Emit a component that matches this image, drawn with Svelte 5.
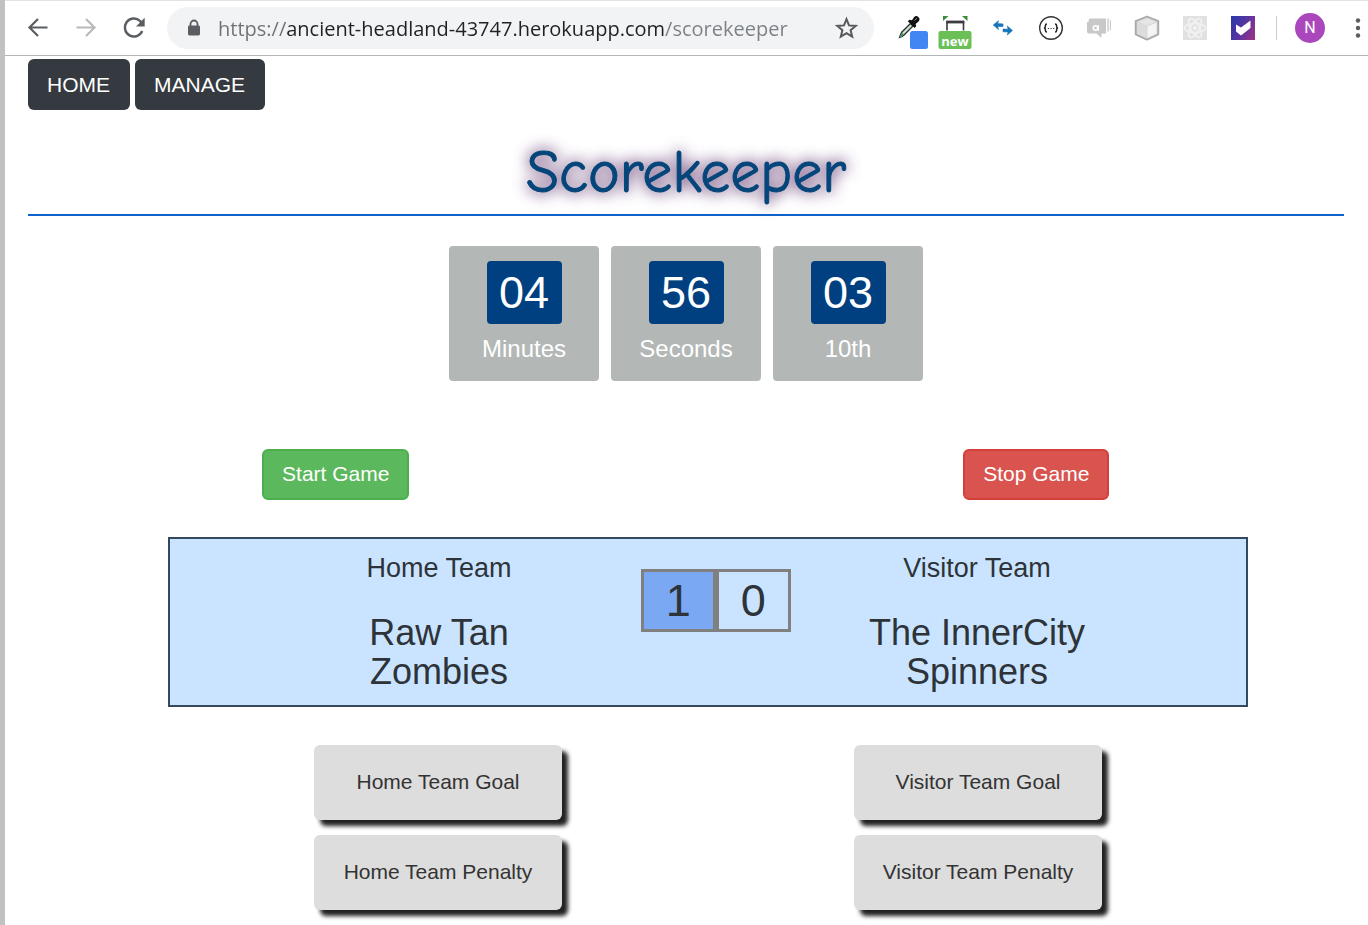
<script>
  let url = $state('https://ancient-headland-43747.herokuapp.com/scorekeeper');
  let homeScore = $state(1);
  let visitorScore = $state(0);
  const clock = [
    { value: '04', label: 'Minutes' },
    { value: '56', label: 'Seconds' },
    { value: '03', label: '10th' }
  ];
</script>

<div class="window">
  <header class="toolbar">
    <button class="slot" aria-label="Back">
      <svg viewBox="0 0 48 48"><path d="M33.5 23.5H16M24 15l-8.5 8.5L24 32" fill="none" stroke="#5a5d61" stroke-width="2.2" /></svg>
    </button>
    <button class="slot" aria-label="Forward">
      <svg viewBox="0 0 48 48"><path d="M14.5 23.5H32M24 15l8.5 8.5L24 32" fill="none" stroke="#bababa" stroke-width="2.2" /></svg>
    </button>
    <button class="slot" aria-label="Reload">
      <svg viewBox="0 0 48 48"><path d="M32.2 27a9 9 0 1 1-2.3-10.2l2 2" fill="none" stroke="#5a5d61" stroke-width="2.4" /><path d="M34.7 13.8v8.7H26z" fill="#5a5d61" /></svg>
    </button>
    <div class="omnibox">
      <svg class="lock" viewBox="0 0 14 18"><path d="M3.5 8V5a3.5 3.5 0 0 1 7 0v3" fill="none" stroke="#5a5d61" stroke-width="1.8" /><rect x="1" y="6.5" width="12" height="10" rx="1.4" fill="#5a5d61" /></svg>
      <input class="url" type="text" aria-label="Address" spellcheck="false" bind:value={url} />
      <button class="star" aria-label="Bookmark">
        <svg viewBox="0 0 24 24"><path d="M12.500 3.200l2.500 6.200 6.700.5-5.100 4.300 1.600 6.500-5.700-3.500-5.700 3.500 1.600-6.500-5.100-4.300 6.700-.5z" fill="none" stroke="#56595d" stroke-width="2" /></svg>
      </button>
    </div>
    <div class="extensions">
      <button class="slot" aria-label="Color picker">
        <svg viewBox="0 0 48 48">
          <path d="M27.500 19.500L18.500 28.500q-1 2-2 5 3-1 4.300-2.200L30 22z" fill="#cfe0d4" stroke="#26322b" stroke-width="1.300" />
          <path d="M20 29.500l-3 4.200" stroke="#3f9166" stroke-width="2" />
          <path d="M24.800 17.300l1.700-1.600 2.500.6 2-3q2-2.200 4.300-.4t.3 4.500L32.600 20l.7 2-1.700 1.900z" fill="#121212" />
          <path d="M31.500 16.500l2.300-2.300" stroke="#999" stroke-width="1" />
          <rect x="27" y="27" width="18" height="18" rx="2.500" fill="#4285f4" />
        </svg>
      </button>
      <button class="slot" aria-label="Window resizer">
        <svg viewBox="0 0 48 48">
          <path d="M12 12h5.500l-5.500 5zM31 12h5.500v5z" fill="#3c8a3c" />
          <path d="M16 26.500v-8.500h16.500V26.500" fill="none" stroke="#3b3b3f" stroke-width="1.600" />
          <path d="M15.200 18h18.100" stroke="#3b3b3f" stroke-width="2.800" />
          <rect x="7.500" y="27" width="33" height="18" rx="2" fill="#6abf57" />
          <text x="24" y="42" text-anchor="middle" class="badge">new</text>
        </svg>
      </button>
      <button class="slot" aria-label="Switch">
        <svg viewBox="0 0 48 48"><g fill="#1674b8" stroke="#1674b8" stroke-width=".6" stroke-linejoin="round"><path d="M14.200 21l5.300-4.300-.8 2.900 5.300.3v2.700l-5.300-.1.800 3z" /><path d="M33.500 26.500L28.300 22l.8 3.200-5.100-.2v2.800l5.100.2-.8 3z" /></g></svg>
      </button>
      <button class="slot" aria-label="JSON viewer">
        <svg viewBox="0 0 48 48">
          <circle cx="24" cy="24" r="11.300" fill="#fff" stroke="#333" stroke-width="1.400" />
          <path d="M20 20q-1.600 0-1.600 1.600v1q0 1.300-1.400 1.400 1.400.1 1.400 1.400v1q0 1.600 1.600 1.600M28 20q1.600 0 1.600 1.600v1q0 1.300 1.400 1.400-1.400.1-1.400 1.400v1q0 1.600-1.600 1.600" fill="none" stroke="#222" stroke-width="1.500" />
          <path d="M20.800 24.500h1.300M23.400 24.500h1.300M26 24.500h1.300" stroke="#444" stroke-width="1.200" />
        </svg>
      </button>
      <button class="slot" aria-label="Chat">
        <svg viewBox="0 0 48 48">
          <path d="M15 14.500h16v15h-4.500V34l-5-4.500H14q-2 0-2-2V18h1.500q0-3.500 1.500-3.500z" fill="#c8c8c8" />
          <path d="M32.300 14.500h1.500v13h-1.500zM34.800 15.500q1.200 0 1.200 1.500v8q0 1.500-1.200 1.500z" fill="#cdcdcd" />
          <circle cx="20.500" cy="24" r="2.200" fill="none" stroke="#fff" stroke-width="1.600" />
          <path d="M23.300 21.200v5.600" stroke="#fff" stroke-width="1.600" />
        </svg>
      </button>
      <button class="slot" aria-label="Cube">
        <svg viewBox="0 0 48 48">
          <path d="M24 12.500l11.300 4.500v13.500L24 35.700l-11.300-5.200V17z" fill="#d8d8d8" stroke="#a8a8a8" stroke-width="1.800" stroke-linejoin="round" />
          <path d="M24 14.500l8.500 3.400-8.500 3.600-8.500-3.600z" fill="#e6e6e6" />
          <path d="M24.500 22.500l9-3.700v10.700l-9 4.300z" fill="#f4f4f4" />
          <path d="M23.500 22.500l-9-3.700v10.700l9 4.300z" fill="#dcdcdc" />
        </svg>
      </button>
      <button class="slot" aria-label="React tools">
        <svg viewBox="0 0 48 48">
          <rect x="12" y="12" width="24" height="24" fill="#e1e1e1" />
          <g fill="none" stroke="#f1f1f1" stroke-width="1.700">
            <ellipse cx="24" cy="24" rx="10.500" ry="4.500" />
            <ellipse cx="24" cy="24" rx="10.500" ry="4.500" transform="rotate(60 24 24)" />
            <ellipse cx="24" cy="24" rx="10.500" ry="4.500" transform="rotate(120 24 24)" />
          </g>
          <circle cx="24" cy="24" r="2" fill="#f4f4f4" />
        </svg>
      </button>
      <button class="slot" aria-label="Tasks">
        <svg viewBox="0 0 48 48">
          <defs><linearGradient id="tasks" x1="0" y1="0.200" x2="1" y2="0.700"><stop offset="0" stop-color="#2f38aa" /><stop offset=".5" stop-color="#55359f" /><stop offset="1" stop-color="#96348a" /></linearGradient></defs>
          <rect x="12" y="12" width="24" height="24" fill="url(#tasks)" />
          <path d="M17 20.500l5 3 9.500-7v7.500L22 31.500 17 27.500z" fill="#fff" />
        </svg>
      </button>
    </div>
    <span class="divider"></span>
    <button class="avatar" aria-label="Profile">N</button>
    <button class="more" aria-label="More">
      <svg viewBox="0 0 20 24"><g fill="#5a5d61"><circle cx="10" cy="4.500" r="2.200" /><circle cx="10" cy="12" r="2.200" /><circle cx="10" cy="19.500" r="2.200" /></g></svg>
    </button>
  </header>

  <main>
    <nav>
      <a class="navlink" href="#home">HOME</a>
      <a class="navlink" href="#manage">MANAGE</a>
    </nav>
    <h1>Scorekeeper</h1>

    <section class="clock" aria-label="Game clock">
      {#each clock as part}
        <div class="unit">
          <span class="digits">{part.value}</span>
          <span class="unit-label">{part.label}</span>
        </div>
      {/each}
    </section>

    <div class="controls">
      <button class="game start">Start Game</button>
      <button class="game stop">Stop Game</button>
    </div>

    <section class="board">
      <div class="team home">
        <h3>Home Team</h3>
        <h2>Raw Tan Zombies</h2>
      </div>
      <div class="score">
        <span class="leading">{homeScore}</span>
        <span>{visitorScore}</span>
      </div>
      <div class="team visitor">
        <h3>Visitor Team</h3>
        <h2>The InnerCity Spinners</h2>
      </div>
    </section>

    <div class="actions">
      <div class="stack">
        <button class="action" onclick={() => homeScore++}>Home Team Goal</button>
        <button class="action">Home Team Penalty</button>
      </div>
      <div class="stack">
        <button class="action" onclick={() => visitorScore++}>Visitor Team Goal</button>
        <button class="action">Visitor Team Penalty</button>
      </div>
    </div>
  </main>
</div>

<style>
  :global(body) {
    margin: 0;
    background: #fff;
  }
  .window {
    box-sizing: border-box;
    min-height: 100vh;
    border-left: 5px solid #c1c1c1;
    font-family: "Liberation Sans", Arial, sans-serif;
    color: #2d3338;
  }
  button {
    font: inherit;
    border: 0;
    padding: 0;
    background: none;
    cursor: pointer;
  }
  svg {
    display: block;
    width: 100%;
    height: 100%;
  }
  .toolbar {
    box-sizing: border-box;
    height: 56px;
    display: flex;
    align-items: center;
    padding-left: 9px;
    border-top: 1px solid #e1e3e6;
    border-bottom: 1px solid #b4b5b7;
  }
  .slot {
    flex: none;
    width: 48px;
    height: 48px;
  }
  .omnibox {
    flex: 1;
    min-width: 0;
    height: 42px;
    box-sizing: border-box;
    margin: 0 9px;
    padding: 0 16px 0 20px;
    display: flex;
    align-items: center;
    border-radius: 21px;
    background: #f1f3f4;
  }
  .lock {
    flex: none;
    width: 14px;
    height: 18px;
  }
  .url {
    flex: 1;
    min-width: 0;
    margin-left: 17px;
    padding: 2px 0 0;
    border: 0;
    outline: 0;
    font: 20px/30px "Open Sans", "Noto Sans", sans-serif;
    color: transparent;
    caret-color: #202124;
    background-image: linear-gradient(90deg, #6d7175 68px, #202124 68px, #202124 447px, #7b8085 447px);
    -webkit-background-clip: text;
    background-clip: text;
  }
  .star {
    flex: none;
    width: 24px;
    height: 24px;
  }
  .extensions {
    display: flex;
  }
  .badge {
    font: bold 13px "Open Sans", sans-serif;
    fill: #fff;
  }
  .divider {
    width: 1px;
    height: 24px;
    margin: 0 18px 0 9px;
    background: #c9cbce;
  }
  .avatar {
    flex: none;
    width: 30px;
    height: 30px;
    border-radius: 50%;
    background: #ab47bc;
    color: #fff;
    font: 16px/30px Roboto, sans-serif;
  }
  .more {
    flex: none;
    width: 20px;
    height: 24px;
    margin-left: 23px;
  }
  main {
    padding: 3px 24px 15px 23px;
  }
  nav {
    display: flex;
    gap: 5px;
  }
  .navlink {
    padding: 0 20px 0 19px;
    border-radius: 6px;
    background: #343a40;
    color: #fff;
    font-size: 21px;
    line-height: 51px;
    text-decoration: none;
  }
  h1 {
    margin: 22px 0 30px;
    border-bottom: 2px solid #0f62cc;
    font: 400 60px/82px "Comic Sans MS", "Comic Neue", cursive;
    text-align: center;
    color: #04457a;
    -webkit-text-stroke: 1px #04457a;
    text-shadow: 0 0 15px #5e3468, 0 0 15px #8a6a9a;
  }
  .clock {
    display: flex;
    justify-content: center;
    gap: 12px;
    color: #fff;
  }
  .unit {
    box-sizing: border-box;
    width: 150px;
    height: 135px;
    padding-top: 15px;
    display: flex;
    flex-direction: column;
    align-items: center;
    border-radius: 4px;
    background: #b3b8b6;
  }
  .digits {
    width: 75px;
    border-radius: 4px;
    background: #003f80;
    font-size: 45px;
    line-height: 63px;
    text-align: center;
  }
  .unit-label {
    margin-top: 7px;
    font-size: 24px;
    line-height: 36px;
  }
  .controls {
    margin-top: 68px;
    display: grid;
    grid-template-columns: 1fr 1fr;
    gap: 85px;
    justify-items: center;
  }
  .game {
    padding: 0 18px 2px;
    border: 2px solid;
    border-radius: 6px;
    color: #fff;
    font-size: 21px;
    line-height: 45px;
  }
  .start {
    background: #5cb85c;
    border-color: #4cae4c;
  }
  .stop {
    background: #d9534f;
    border-color: #d43f3a;
  }
  .board,
  .actions {
    box-sizing: border-box;
    max-width: 1080px;
    margin: 37px 96px 0 140px;
    display: grid;
  }
  .board {
    grid-template-columns: 1fr 2fr 2fr 2fr 1fr;
    align-items: start;
    padding: 11px 0 14px;
    border: 2px solid #34495e;
    background: #cae4ff;
    text-align: center;
  }
  .team {
    padding: 0 22px;
  }
  .home {
    grid-column: 2;
  }
  h2,
  h3 {
    margin: 0;
    font-weight: 400;
  }
  h3 {
    font-size: 27px;
    line-height: 36px;
  }
  h2 {
    margin-top: 27px;
    font-size: 36px;
    line-height: 39px;
  }
  .score {
    display: flex;
    margin: 19px 0 0 25%;
  }
  .score span {
    flex: none;
    box-sizing: border-box;
    width: 75px;
    border: 3px solid #808080;
    font-size: 45px;
    line-height: 57px;
  }
  .score .leading {
    background: #7aa8f2;
  }
  .actions {
    grid-template-columns: 1fr 1fr;
    justify-items: center;
    margin-top: 38px;
  }
  .stack {
    display: grid;
    gap: 15px;
  }
  .action {
    width: 248px;
    height: 75px;
    padding-bottom: 2px;
    border-radius: 6px;
    background: #ddd;
    box-shadow: 6px 6px 4px #222;
    color: #333;
    font-size: 21px;
  }
</style>
